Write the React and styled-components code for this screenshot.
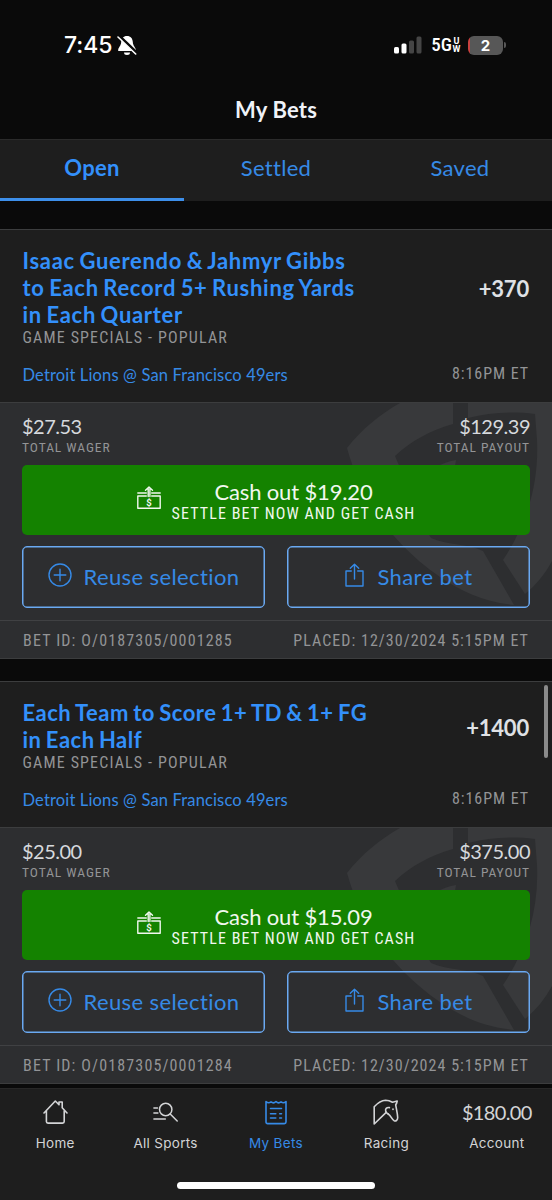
import styled, { createGlobalStyle } from 'styled-components';

const GlobalStyle = createGlobalStyle`
  * { box-sizing: border-box; }
  body {
    margin: 0;
    background: #0a0a0a;
    font-family: Lato, "Liberation Sans", sans-serif;
  }
  svg { display: block; flex: none; }
`;

const Screen = styled.div`
  position: relative;
  width: 552px;
  height: 1200px;
  overflow: hidden;
  display: flex;
  flex-direction: column;
  background: #0a0a0a;
`;

/* ---------- status bar ---------- */
const StatusBar = styled.div`
  height: 90px;
  padding: 0 46px 0 64px;
  display: flex;
  align-items: center;
  justify-content: space-between;
  color: #fff;
  font-family: Inter, sans-serif;
`;
const StatusGroup = styled.div`
  display: flex;
  align-items: center;
`;
const Clock = styled.span`
  font-size: 23px;
  font-weight: 550;
  letter-spacing: -0.1px;
  margin-right: 5px;
`;
const Network = styled.span`
  margin-left: 9px;
  font: 500 19px Roboto, sans-serif;
  font-stretch: 86%;
  line-height: 20px;
`;
const NetworkBand = styled.span`
  display: flex;
  flex-direction: column;
  width: 9px;
  font: 700 9px/8px Roboto, sans-serif;
  text-align: center;
`;
const Battery = styled.span`
  width: 35px;
  height: 19px;
  margin-left: 7px;
  border-radius: 6px;
  background: linear-gradient(90deg, #c9413f 2px, #575757 2px);
  font-size: 15px;
  font-weight: 700;
  line-height: 19px;
  text-align: center;
`;
const BatteryTip = styled.span`
  width: 2px;
  height: 6px;
  margin-left: 1px;
  border-radius: 0 2px 2px 0;
  background: #575757;
`;

/* ---------- header ---------- */
const Heading = styled.h1`
  margin: 0 0 10px;
  color: #f0f2f8;
  font-size: 22px;
  font-weight: 700;
  letter-spacing: 0.2px;
  line-height: 39px;
  text-align: center;
`;
const Tabs = styled.nav`
  display: grid;
  grid-template-columns: repeat(3, 1fr);
  height: 62px;
  margin-bottom: 28px;
  border-top: 1px solid #2b2b2b;
  background: #1e1e1e;
  flex: none;
`;
const Tab = styled.a`
  border-bottom: 3px solid ${(p) => (p.$active ? '#3d8fea' : 'transparent')};
  color: ${(p) => (p.$active ? '#3390fb' : '#368ae6')};
  font-size: 22px;
  font-weight: ${(p) => (p.$active ? 700 : 400)};
  letter-spacing: 0.3px;
  line-height: 55px;
  text-align: center;
`;

/* ---------- bet card ---------- */
const Card = styled.article`
  flex: none;
  margin-bottom: 22px;
  border-top: 1px solid #3c3d3e;
  border-bottom: 1px solid #3c3d3e;
`;
const CardHead = styled.div`
  padding: 18px 23px 17px 22.5px;
  border-bottom: 1px solid #3c3d3e;
  background: #1e1e1e;
`;
const TitleRow = styled.div`
  display: flex;
  align-items: center;
  justify-content: space-between;
`;
const Title = styled.h2`
  margin: -1px 0 1px;
  color: #3390fb;
  font-size: 22px;
  font-weight: 700;
  letter-spacing: ${(p) => p.$track}px;
  line-height: 27px;
  word-spacing: -1.5px;
  white-space: pre;
`;
const Odds = styled.span`
  color: #dfe1e5;
  font-size: 22px;
  font-weight: 700;
  letter-spacing: -0.2px;
`;
const Caps = styled.div`
  color: ${(p) => p.$color || '#939496'};
  font-family: Roboto, sans-serif;
  font-stretch: 75%;
  font-size: ${(p) => p.$size || 16}px;
  letter-spacing: ${(p) => p.$track || 1.15}px;
  line-height: ${(p) => p.$line || 18}px;
  text-transform: uppercase;
  white-space: nowrap;
`;
const MatchRow = styled.div`
  display: flex;
  align-items: flex-start;
  justify-content: space-between;
  margin-top: 18px;
`;
const Match = styled.a`
  color: #368ae6;
  font-size: 16.5px;
  letter-spacing: 0.15px;
  line-height: 21px;
  height: 20px;
`;
const CardBody = styled.div`
  position: relative;
  overflow: hidden;
  background: #2d2e30;
`;
const Watermark = styled.svg`
  position: absolute;
  top: 0;
  right: 0;
`;
const BodyContent = styled.div`
  position: relative;
  padding: 13px 22px 12px;
`;
const Totals = styled.div`
  display: flex;
  justify-content: space-between;
  margin-bottom: 10px;
`;
const Total = styled.div`
  display: flex;
  flex-direction: column;
  gap: 1px;
  align-items: ${(p) => (p.$right ? 'flex-end' : 'flex-start')};
`;
const Amount = styled.span`
  color: #d6d9dd;
  font-size: 20px;
  letter-spacing: -0.5px;
  line-height: 21px;
  height: 22px;
`;
const CashOut = styled.button`
  display: flex;
  align-items: center;
  justify-content: center;
  gap: 11px;
  width: 508px;
  height: 70px;
  margin: 0 0 11px;
  padding: 0;
  border: 0;
  border-radius: 5px;
  background: #148200;
  color: #f1f8ef;
  font-family: inherit;

  svg { margin-top: -4px; }
`;
const CashOutText = styled.span`
  display: flex;
  flex-direction: column;
  align-items: center;
  padding-top: 4px;
  font-size: 22px;
  letter-spacing: -0.15px;
  line-height: 24px;
`;
const Actions = styled.div`
  display: grid;
  grid-template-columns: 1fr 1fr;
  gap: 22px;
`;
const Action = styled.button`
  display: flex;
  align-items: center;
  justify-content: center;
  gap: ${(p) => p.$gap}px;
  height: 62px;
  padding: 0 0 2px 1px;
  border: 1px solid #6aa9f2;
  border-radius: 5px;
  box-shadow: inset 0 0 0 0.5px #6aa9f2;
  background: transparent;
  color: #368ae6;
  font-family: inherit;
  font-size: 22px;
  letter-spacing: 0.4px;

  svg { margin-top: -3px; }
`;
const CardFoot = styled.div`
  position: relative;
  display: flex;
  justify-content: space-between;
  height: 38px;
  padding: 0 23px;
  border-top: 1px solid #404143;
  background: #2d2e30;
`;
const ScrollThumb = styled.div`
  position: absolute;
  top: 685px;
  right: 4px;
  width: 4px;
  height: 73px;
  border-radius: 2px;
  background: #8b8b8b;
`;

/* ---------- bottom bar ---------- */
const BottomBar = styled.footer`
  position: absolute;
  left: 0;
  right: 0;
  bottom: 0;
  height: 112px;
  border-top: 1px solid #272727;
  background: #1e1e1e;
`;
const NavItems = styled.div`
  display: grid;
  grid-template-columns: repeat(5, 1fr);
`;
const NavItem = styled.a`
  display: flex;
  flex-direction: column;
  align-items: center;
  color: ${(p) => (p.$active ? '#368ae6' : '#d3d4d6')};
`;
const NavIcon = styled.span`
  display: flex;
  align-items: center;
  height: 46px;
  font-size: 20px;
  letter-spacing: -0.65px;
`;
const NavLabel = styled.span`
  font-family: Inter, sans-serif;
  font-size: 13.5px;
  letter-spacing: 0.3px;
  line-height: 17px;
`;
const HomeIndicator = styled.div`
  width: 198px;
  height: 7px;
  margin: 30px auto 0;
  border-radius: 4px;
  background: #fff;
`;

const Icon = ({ w = 25, h = 25, sw = 1.4, children }) => (
  <svg width={w} height={h} viewBox={`0 0 ${w} ${h}`} fill="none" stroke="currentColor"
    strokeWidth={sw} strokeLinecap="round" strokeLinejoin="round">
    {children}
  </svg>
);

const BellOff = () => (
  <svg width="20" height="21" viewBox="0 0 20 21">
    <path d="M10 1C6.300 1 4.400 3.600 4.200 7 4 11 1.200 12.500 1.200 15v.9h17.600V15c0-2.500-2.800-4-3-8C15.600 3.600 13.700 1 10 1z" fill="#fff" />
    <path d="M7 17.500h6a3 2.500 0 0 1-6 0z" fill="#fff" />
    <path d="M1.700.8 20 18.300" stroke="#0a0a0a" strokeWidth="3.400" />
    <path d="M1 2 18.700 19" stroke="#fff" strokeWidth="1.600" strokeLinecap="round" />
  </svg>
);

const Signal = () => (
  <svg width="28" height="18" viewBox="0 0 28 18">
    <rect x="0" y="11" width="5" height="6.500" rx="1.500" fill="#fff" />
    <rect x="7.500" y="7.500" width="5" height="10" rx="1.500" fill="#fff" />
    <rect x="15" y="4.500" width="5" height="13" rx="1.500" fill="#454545" />
    <rect x="22.500" y="0.500" width="5" height="17" rx="1.500" fill="#454545" />
  </svg>
);

const CashIcon = () => (
  <Icon w={24} h={24} sw={1.4}>
    <path d="M8.500 4.300 12 1l3.500 3.300M11.200 2v8.500M12.900 2v8.500M.8 7h8.500M14.700 7h8.500M9.300 10H.8v12.200h22.400V10h-8.500" />
    <text x="12" y="20" fontSize="9.500" fontWeight="700" fontFamily="Roboto, sans-serif"
      textAnchor="middle" fill="currentColor" stroke="none">$</text>
  </Icon>
);

const PlusIcon = () => (
  <Icon w={24} h={24}>
    <circle cx="12" cy="12" r="11" />
    <path d="M12 6.200v11.600M6.200 12h11.600" />
  </Icon>
);

const ShareIcon = () => (
  <Icon w={19} h={24}>
    <path d="M6.300 8H1v15h17V8h-5.300M9.500 16V1.300M5.300 5.300l4.200-4 4.200 4" />
  </Icon>
);

const HomeIcon = () => (
  <Icon sw={1.6}>
    <path d="M1 13 12.300 1 16 4.800V2h3.200v5.800L24 13M3.400 11v10.500c0 1 .6 1.600 1.600 1.600h14.600c1 0 1.600-.6 1.600-1.600V11" />
  </Icon>
);

const SearchIcon = () => (
  <Icon sw={1.5}>
    <circle cx="12.700" cy="9.500" r="6.200" />
    <path d="m17.200 14 7 7M.9 8h3.600M.9 13h4M.9 19h11.400" />
  </Icon>
);

const SlipIcon = () => (
  <Icon w={22} h={25} sw={1.6}>
    <path d="M1 1.500c1.700 1.600 3.400 1.600 5 .4 1.600 1.200 3.400 1.200 5-.4 1.600 1.600 3.400 1.600 5 .4 1.600 1.200 3.300 1.200 5-.4V22c0 1-.6 1.600-1.600 1.600H2.600C1.600 23.600 1 23 1 22zM5.500 8.500h11M5.500 13.700h5.300M14.700 13.700h1.800M5.500 18h5.300M14.700 18h1.800" />
  </Icon>
);

const HorseIcon = () => (
  <Icon w={26} h={26} sw={1.6}>
    <path d="M1.200 25V7.800C5 3.600 8.500 1.300 12.500 1.200c3 0 5 .8 7 2L24.200 2c-.3 1.800-.8 2.900-1.500 3.800.6 4 1.800 8.500 2 12.700 0 2.500-1.700 3.900-3.500 3.300-2-.8-3.300-5.400-6-6.800M1.200 25l12-11.600" />
    <path d="M16.400 8.600c-2.900-.4-4.300 1.200-3.700 3.600.3 1.300 1.200 2.100 2.500 2.800M20 10v.4" />
  </Icon>
);

/* Faded shield behind the wager area */
const Shield = () => (
  <Watermark width="212" height="217" viewBox="340 403 212 217" fill="#38393b">
    <path d="M400 403h53v21c-22 6-42 17-58 32l11 26c5 20 14 38 25 56 18 8 36 5 52 13l31 54c-30-3-52-13-74-28-52-36-80-82-93-129 15-19 32-33 53-45z" />
    <path d="M438 467c5-4 11-6 18-7l-2 12h-18z" />
    <path d="M468 403h84v158c-7 13-16 24-27 33l-22-34c24-36 36-76 34-120l-2-26c-25-3-46-1-67 4z" />
  </Watermark>
);

const bets = [
  {
    title: 'Isaac Guerendo & Jahmyr Gibbs\nto Each Record 5+ Rushing Yards\nin Each Quarter',
    track: 0.7,
    odds: '+370',
    wager: '$27.53',
    payout: '$129.39',
    cash: '$19.20',
    id: 'O/0187305/0001285',
  },
  {
    title: 'Each Team to Score 1+ TD & 1+ FG\nin Each Half',
    track: 0.5,
    odds: '+1400',
    wager: '$25.00',
    payout: '$375.00',
    cash: '$15.09',
    id: 'O/0187305/0001284',
  },
];

const navItems = [
  { label: 'Home', icon: <HomeIcon /> },
  { label: 'All Sports', icon: <SearchIcon /> },
  { label: 'My Bets', icon: <SlipIcon />, active: true },
  { label: 'Racing', icon: <HorseIcon /> },
  { label: 'Account', icon: '$180.00' },
];

const BetCard = ({ bet }) => (
  <Card>
    <CardHead>
      <TitleRow>
        <Title $track={bet.track}>{bet.title}</Title>
        <Odds>{bet.odds}</Odds>
      </TitleRow>
      <Caps>Game Specials - Popular</Caps>
      <MatchRow>
        <Match>Detroit Lions @ San Francisco 49ers</Match>
        <Caps $line={17} $track={0.95}>8:16PM ET</Caps>
      </MatchRow>
    </CardHead>
    <CardBody>
      <Shield />
      <BodyContent>
        <Totals>
          <Total>
            <Amount>{bet.wager}</Amount>
            <Caps $size={13.5} $line={16} $track={0.95}>Total Wager</Caps>
          </Total>
          <Total $right>
            <Amount>{bet.payout}</Amount>
            <Caps $size={13.5} $line={16} $track={0.95}>Total Payout</Caps>
          </Total>
        </Totals>
        <CashOut>
          <CashIcon />
          <CashOutText>
            Cash out {bet.cash}
            <Caps as="span" $color="#f1f8ef" $line={20} $track={1.1}>Settle bet now and get cash</Caps>
          </CashOutText>
        </CashOut>
        <Actions>
          <Action $gap={11}><PlusIcon />Reuse selection</Action>
          <Action $gap={13}><ShareIcon />Share bet</Action>
        </Actions>
      </BodyContent>
      <CardFoot>
        <Caps $line={39}>Bet ID: {bet.id}</Caps>
        <Caps $line={39} $track={1.04}>Placed: 12/30/2024 5:15PM ET</Caps>
      </CardFoot>
    </CardBody>
  </Card>
);

export default function App() {
  return (
    <Screen>
      <GlobalStyle />
      <StatusBar>
        <StatusGroup>
          <Clock>7:45</Clock>
          <BellOff />
        </StatusGroup>
        <StatusGroup>
          <Signal />
          <Network>5G</Network>
          <NetworkBand><span>U</span><span>W</span></NetworkBand>
          <Battery>2</Battery>
          <BatteryTip />
        </StatusGroup>
      </StatusBar>
      <Heading>My Bets</Heading>
      <Tabs>
        <Tab $active>Open</Tab>
        <Tab>Settled</Tab>
        <Tab>Saved</Tab>
      </Tabs>
      {bets.map((bet) => <BetCard key={bet.id} bet={bet} />)}
      <ScrollThumb />
      <BottomBar>
        <NavItems>
          {navItems.map((item) => (
            <NavItem key={item.label} $active={item.active}>
              <NavIcon>{item.icon}</NavIcon>
              <NavLabel>{item.label}</NavLabel>
            </NavItem>
          ))}
        </NavItems>
        <HomeIndicator />
      </BottomBar>
    </Screen>
  );
}
